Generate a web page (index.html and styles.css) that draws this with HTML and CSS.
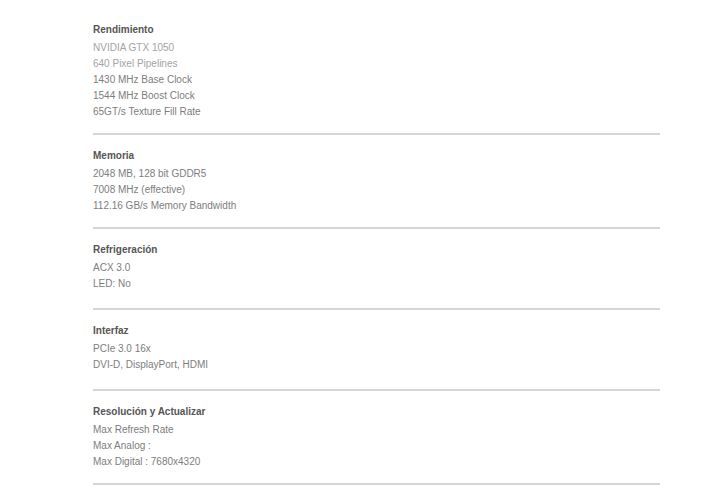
FILE: index.html
```html
<!DOCTYPE html>
<html lang="es">
<head>
<meta charset="utf-8">
<link rel="stylesheet" href="styles.css">
</head>
<body>
<div class="specs">
  <section class="spec">
    <h3 class="spec-title">Rendimiento</h3>
    <ul class="spec-list">
      <li class="light">NVIDIA GTX 1050</li>
      <li class="light">640 Pixel Pipelines</li>
      <li>1430 MHz Base Clock</li>
      <li>1544 MHz Boost Clock</li>
      <li>65GT/s Texture Fill Rate</li>
    </ul>
  </section>
  <section class="spec">
    <h3 class="spec-title">Memoria</h3>
    <ul class="spec-list">
      <li>2048 MB, 128 bit GDDR5</li>
      <li>7008 MHz (effective)</li>
      <li>112.16 GB/s Memory Bandwidth</li>
    </ul>
  </section>
  <section class="spec">
    <h3 class="spec-title">Refrigeración</h3>
    <ul class="spec-list">
      <li>ACX 3.0</li>
      <li>LED: No</li>
    </ul>
  </section>
  <section class="spec">
    <h3 class="spec-title">Interfaz</h3>
    <ul class="spec-list">
      <li>PCIe 3.0 16x</li>
      <li>DVI-D, DisplayPort, HDMI</li>
    </ul>
  </section>
  <section class="spec">
    <h3 class="spec-title">Resolución y Actualizar</h3>
    <ul class="spec-list">
      <li>Max Refresh Rate</li>
      <li>Max Analog :</li>
      <li>Max Digital : 7680x4320</li>
    </ul>
  </section>
</div>
</body>
</html>
```

FILE: styles.css
```css
html, body {
  margin: 0;
  padding: 0;
  background: #ffffff;
}

body {
  font-family: "Liberation Sans", Arial, sans-serif;
  font-size: 10px;
  color: #777777;
}

.specs {
  width: 567px;
  padding: 22px 0 0 93px;
}

.spec {
  min-height: 53px;
  padding-bottom: 13px;
  border-bottom: 2px solid #d6d6d6;
  margin-bottom: 13px;
}

.spec-title {
  margin: 0 0 2px;
  font-size: 10px;
  line-height: 16px;
  font-weight: bold;
  color: #555555;
}

.spec-list {
  list-style: none;
  margin: 0;
  padding: 0;
}

.spec-list li {
  line-height: 16px;
  color: #7d7d7d;
}

.spec-list li.light {
  color: #a3a3a3;
}
```
